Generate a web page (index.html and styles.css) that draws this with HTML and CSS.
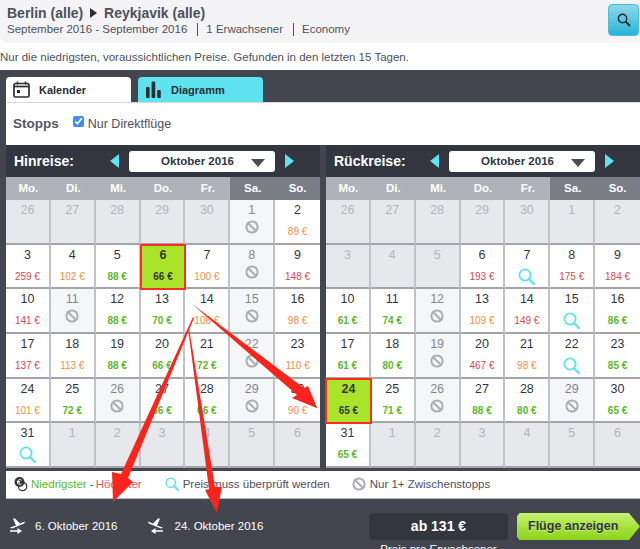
FILE: index.html
```html
<!DOCTYPE html>
<html lang="de">
<head>
<meta charset="utf-8">
<title>Flüge Kalender</title>
<link rel="stylesheet" href="styles.css">
</head>
<body>
<svg class="defs" width="0" height="0" aria-hidden="true">
  <symbol id="no" viewBox="0 0 14 14"><circle cx="7" cy="7" r="5.6" fill="none" stroke="currentColor" stroke-width="2"/><path d="M3.2 3.2 10.8 10.8" stroke="currentColor" stroke-width="2"/></symbol>
  <symbol id="lens" viewBox="0 0 17 17"><circle cx="7" cy="7" r="5.6" fill="none" stroke="currentColor" stroke-width="1.8"/><path d="M11 11 15.8 15.8" stroke="currentColor" stroke-width="2.4" stroke-linecap="round"/></symbol>
  <symbol id="plane" viewBox="0 0 16 16"><path d="M1 9.5 7 7.4 4 0.6 6 0.6 11 5.6 16 3.4 15.2 5.6 3 10.6Z" fill="currentColor"/><path d="M1 12.2h7.5V10l4.5 3-4.5 3v-2.2H1z" fill="currentColor"/></symbol>
</svg>
<header class="top">
  <div>
    <div class="route">Berlin (alle) <span class="tri"></span> Reykjavik (alle)</div>
    <div class="meta"><span>September 2016 - September 2016</span><span class="sep">1 Erwachsener</span><span class="sep">Economy</span></div>
  </div>
  <button class="search" aria-label="Suchen"><svg width="14" height="14" viewBox="0 0 14 14"><circle cx="5.5" cy="5.5" r="4.2" fill="none" stroke="#23262c" stroke-width="1.4"/><path d="M8.6 8.6 13 13" stroke="#23262c" stroke-width="2"/></svg></button>
</header>
<p class="note">Nur die niedrigsten, voraussichtlichen Preise. Gefunden in den letzten 15 Tagen.</p>
<main class="panel">
  <div class="tabs">
    <div class="tab active"><svg width="17" height="17" viewBox="0 0 17 17"><rect x="1" y="2.5" width="15" height="13.5" rx="1.5" fill="none" stroke="#2b2d33" stroke-width="1.7"/><path d="M1 5.5h15" stroke="#2b2d33" stroke-width="1.7"/><path d="M4.5 0.5v3M12.5 0.5v3" stroke="#2b2d33" stroke-width="1.5"/><rect x="4" y="9" width="3" height="3" fill="#2b2d33"/></svg>Kalender</div>
    <div class="tab alt"><svg width="17" height="17" viewBox="0 0 17 17"><rect x="1" y="6" width="3.6" height="11" rx="1" fill="#2b2d33"/><rect x="6.6" y="0.5" width="3.6" height="16.5" rx="1" fill="#2b2d33"/><rect x="12.2" y="9" width="3.6" height="8" rx="1" fill="#2b2d33"/></svg>Diagramm</div>
  </div>
  <div class="stops"><strong>Stopps</strong><label><input type="checkbox" checked> Nur Direktflüge</label></div>
  <div class="cals">
    <section class="cal">
      <div class="calhead"><span class="caltitle">Hinreise:</span><span class="al"></span><span class="month">Oktober 2016<i></i></span><span class="ar"></span></div>
      <div class="grid" id="g1"></div>
    </section>
    <section class="cal">
      <div class="calhead"><span class="caltitle">Rückreise:</span><span class="al"></span><span class="month">Oktober 2016<i></i></span><span class="ar"></span></div>
      <div class="grid" id="g2"></div>
    </section>
  </div>
  <div class="legend">
    <span class="lg"><svg class="coin" width="14" height="16" viewBox="0 0 14 16"><circle cx="8.6" cy="10.5" r="4.2" fill="#fff" stroke="#33363c" stroke-width="1.2"/><circle cx="5.5" cy="6" r="5" fill="#33363c"/><path d="M7.5 4.2A2.4 2.4 0 1 0 7.5 7.8M3 5.4h3M3 6.8h3" fill="none" stroke="#fff" stroke-width="0.9"/></svg><span class="green">Niedrigster</span>&nbsp;- <span class="red">Höchster</span></span>
    <span class="lg l2"><svg class="ic lens" width="14" height="14"><use href="#lens"/></svg>Preis muss überprüft werden</span>
    <span class="lg l3"><svg class="ic no" width="14" height="14"><use href="#no"/></svg>Nur 1+ Zwischenstopps</span>
  </div>
  <div class="foot">
    <span class="leg"><svg class="pl" width="16" height="16"><use href="#plane"/></svg>6. Oktober 2016</span>
    <span class="leg l2"><svg class="pl flip" width="16" height="16"><use href="#plane"/></svg>24. Oktober 2016</span>
    <div class="price"><div class="pbox">ab 131 €</div><div class="psub">Preis pro Erwachsener</div></div>
    <button class="go">Flüge anzeigen</button>
  </div>
</main>
<svg class="arrows" width="640" height="549" viewBox="0 0 640 549" aria-hidden="true">
  <path fill="#f9241b" d="M192 304 L304 388 L308 386 L317.3 408.3 L292 398 L297 395 Z"/>
  <path fill="#f9241b" d="M193 317 L194 318 L128 478 L133 482 L113 502 L112 472 L121 474 Z"/>
  <path fill="#f9241b" d="M188 328 L189 328 L215 487 L222 487 L216.7 513 L205 490 L209 489 Z"/>
</svg>
<script src="app.js"></script>
</body>
</html>
```
FILE: styles.css
```css
* { box-sizing: border-box; }
html, body { margin: 0; padding: 0; }
body { width: 640px; height: 549px; overflow: hidden; position: relative; font-family: "Liberation Sans", Arial, sans-serif; color: #4a4c56; background: #fff; }
.defs { position: absolute; }
.top { height: 43px; background: #f4f4f6; border-radius: 0 0 0 8px; padding: 5px 1px 0 7px; display: flex; justify-content: space-between; align-items: flex-start; }
.route { font-size: 14px; font-weight: 700; line-height: 17px; color: #4e505c; }
.tri { display: inline-block; width: 0; height: 0; border-left: 7px solid #2b2d33; border-top: 5.5px solid transparent; border-bottom: 5.5px solid transparent; margin: 0 3px; }
.meta { font-size: 11.5px; line-height: 15px; color: #4e505c; display: flex; }
.sep { margin-left: 10px; padding-left: 9px; position: relative; }
.sep::before { content: ""; position: absolute; left: 0; top: 1px; height: 13px; border-left: 1px solid #4e505c; }
.search { width: 31px; height: 32px; border: 1px solid #4dbcd8; border-radius: 4px; margin-top: -1px; background: linear-gradient(#8ed9ea, #27b4d8); padding: 0; display: flex; align-items: center; justify-content: center; }
.note { margin: 0; height: 27px; font-size: 11.5px; line-height: 28px; color: #4e505c; }
.panel { height: 479px; background: #43464f; padding-top: 7px; display: flex; flex-direction: column; }
.tabs { height: 25px; display: flex; gap: 7px; padding-left: 6px; }
.tab { width: 125px; height: 25px; border-radius: 4px 4px 0 0; display: flex; align-items: center; padding-left: 7px; gap: 9px; font-size: 11px; font-weight: 700; color: #2b2d33; }
.active { background: #fff; }
.alt { background: #5ce3ee; }
.stops { margin-left: 6px; height: 43px; background: #fff; border-top: 1px solid #d8d8dc; padding: 0 0 0 7px; display: flex; align-items: flex-start; font-size: 12.5px; color: #4e505c; }
.stops strong { font-size: 13.5px; line-height: 42px; margin-right: 14px; color: #55575f; }
.stops label { display: flex; align-items: center; gap: 4px; height: 41px; }
.stops input { margin: -4px 0 0 0; width: 11px; height: 11px; accent-color: #3d8fe8; }
.cals { display: flex; gap: 6px; padding-left: 6px; }
.cal { width: 314px; background: #33363f; }
.calhead { height: 32px; display: flex; align-items: center; padding-left: 8px; }
.caltitle { width: 90px; font-size: 14px; font-weight: 700; color: #fff; }
.al, .ar { width: 0; height: 0; border-top: 7.5px solid transparent; border-bottom: 7.5px solid transparent; }
.al { border-right: 9px solid #5ce3ee; margin-right: 10px; margin-left: 6px; }
.ar { border-left: 9px solid #5ce3ee; margin-left: 10px; }
.month { width: 146px; height: 21px; background: #fff; border-radius: 3px; font-size: 11.5px; font-weight: 700; color: #33363f; display: flex; align-items: center; justify-content: center; padding-right: 9px; position: relative; }
.month i { position: absolute; right: 10px; top: 8px; width: 0; height: 0; border-left: 7px solid transparent; border-right: 7px solid transparent; border-top: 8px solid #4a4c56; }
.grid { display: grid; grid-template-columns: repeat(7, 1fr); grid-template-rows: 23px repeat(6, 44.67px); background: #9a9ca3; }
.wd { background: #b0b2ba; color: #fff; font-size: 11.5px; font-weight: 700; display: flex; align-items: center; justify-content: center; padding-bottom: 1px; }
.wd.we { background: #7b7d86; }
.d { background: #fff; text-align: center; border-right: 2px solid #c2c3c8; border-bottom: 2px solid #a3a5ab; font-size: 12.5px; color: #33363f; line-height: 14px; padding-top: 3px; display: flex; flex-direction: column; align-items: center; position: relative; }
.d:nth-child(7n) { border-right: 0; }
.d .pr { position: absolute; top: 26px; left: 0; right: 0; font-size: 10px; line-height: 12px; }
.d .ic { margin-top: 3px; }
.d .ic.lens { margin-top: 6px; }
.off { background: #e6e8eb; color: #b4b6bb; }
.st { background: #f5f6f8; color: #85878e; }
.sel { background: #a9e42a; font-weight: 700; outline: 2px solid #f9301f; outline-offset: -1px; border: 0; z-index: 1; }
.sel .pr { color: #33363f !important; font-weight: 700; }
.lo { color: #5bb82a; font-weight: 700; }
.mid { color: #f78f3c; }
.hi { color: #d9484f; }
.no { color: #abadb3; }
.lens { color: #5ce3ee; }
.legend { margin-left: 6px; margin-top: 3px; height: 28px; background: #fff; display: flex; align-items: center; font-size: 11.5px; padding-left: 8px; color: #4e505c; border-bottom: 1px solid #b8b9be; }
.lg { display: flex; align-items: center; }
.coin { margin-right: 3px; }
.lg .ic { margin-right: 4px; }
.l2 { margin-left: 23px; }
.l3 { margin-left: 22px; }
.green { color: #5bb82a; }
.red { color: #e0585f; margin-left: 2px; }
.foot { flex: 1; display: flex; align-items: flex-start; padding: 14px 0 0 9px; color: #fff; font-size: 11.5px; position: relative; }
.leg { display: flex; align-items: center; gap: 10px; height: 27px; }
.leg.l2 { margin-left: 31px; }
.pl { color: #fff; }
.flip { transform: scaleX(-1); }
.price { position: absolute; left: 369px; top: 14px; width: 139px; text-align: center; }
.pbox { height: 27px; background: #33363f; border-radius: 4px; font-size: 14px; font-weight: 700; line-height: 27px; color: #fff; }
.psub { font-size: 11.5px; line-height: 14px; margin-top: 2px; }
.go { position: absolute; left: 517px; top: 14px; width: 123px; height: 27px; border: 0; background: linear-gradient(#c6f373, #a5e03a 55%, #8dd41f); clip-path: polygon(0 12%, 2% 0, 91% 0, 100% 50%, 91% 100%, 2% 100%, 0 88%); color: #33363f; font: 700 12.5px "Liberation Sans", Arial, sans-serif; text-align: left; padding: 0 0 0 11px; text-shadow: 0 1px 0 rgba(255,255,255,.45); }
.arrows { position: absolute; left: 0; top: 0; pointer-events: none; }
```
FILE: app.js
```js
const WD = ["Mo.", "Di.", "Mi.", "Do.", "Fr.", "Sa.", "So."];
const cal1 = [
  "26o","27o","28o","29o","30o","1s","2 89 m",
  "3 259 h","4 102 m","5 88 l","6 66 x","7 100 m","8s","9 148 h",
  "10 141 h","11s","12 88 l","13 70 l","14 106 m","15s","16 98 m",
  "17 137 h","18 113 m","19 88 l","20 66 l","21 72 l","22s","23 110 m",
  "24 101 m","25 72 l","26s","27 66 l","28 66 l","29s","30 90 m",
  "31q","1o","2o","3o","4o","5o","6o"
];
const cal2 = [
  "26o","27o","28o","29o","30o","1o","2o",
  "3o","4o","5o","6 193 h","7q","8 175 h","9 184 h",
  "10 61 l","11 74 l","12s","13 109 m","14 149 h","15q","16 86 l",
  "17 61 l","18 80 l","19s","20 467 h","21 98 m","22q","23 85 l",
  "24 65 x","25 71 l","26s","27 88 l","28 80 l","29s","30 65 l",
  "31 65 l","1o","2o","3o","4o","5o","6o"
];
const CLS = { l: "lo", m: "mid", h: "hi", x: "" };
function icon(name) {
  const size = name === "no" ? 14 : 17;
  return '<svg class="ic ' + name + '" width="' + size + '" height="' + size + '"><use href="#' + name + '"/></svg>';
}
function cell(spec) {
  const parts = spec.split(" ");
  if (parts.length === 3) {
    const sel = parts[2] === "x";
    return '<div class="d' + (sel ? " sel" : "") + '">' + parts[0] + '<span class="pr ' + CLS[parts[2]] + '">' + parts[1] + " €</span></div>";
  }
  const num = parseInt(spec, 10);
  const kind = spec.slice(-1);
  if (kind === "o") return '<div class="d off">' + num + "</div>";
  if (kind === "s") return '<div class="d st">' + num + icon("no") + "</div>";
  return '<div class="d">' + num + icon("lens") + "</div>";
}
function fill(id, data) {
  const head = WD.map(function (w, i) { return '<div class="wd' + (i > 4 ? " we" : "") + '">' + w + "</div>"; }).join("");
  document.getElementById(id).innerHTML = head + data.map(cell).join("");
}
fill("g1", cal1);
fill("g2", cal2);
```
